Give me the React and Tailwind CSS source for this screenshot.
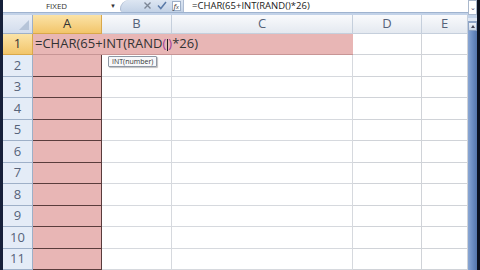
import React from "react";

const rows = [1, 2, 3, 4, 5, 6, 7, 8, 9, 10, 11];
const cols = ["A", "B", "C", "D", "E"];
const font = { fontFamily: '"Open Sans", "Liberation Sans", sans-serif' };

function FormulaText({ size }) {
  const big = size === "big";
  return (
    <span>
      =CHAR(65+INT(RAND
      <span className={big ? "text-[#a0409a]" : ""}>(</span>
      {big && <span className="inline-block w-px h-[12px] bg-[#222] align-middle mx-[0.5px]" />}
      <span className={big ? "text-[#a0409a]" : ""}>)</span>
      *26)
    </span>
  );
}

export default function App() {
  return (
    <div className="w-[480px] h-[270px] bg-[#0f1626] flex overflow-hidden" style={font}>
      <div className="w-[3px] shrink-0 bg-[#16203a]" />
      <div className="w-[465px] shrink-0 flex flex-col">
        {/* formula bar */}
        <div className="h-[15px] flex bg-white">
          <div className="w-[117px] flex items-center relative text-[8px] text-[#333] leading-none">
            <span className="flex-1 text-center">FIXED</span>
            <span className="text-[6px] pr-[4px] text-[#333]">▼</span>
          </div>
          <div className="w-[63px] flex items-center justify-end gap-[5px] pr-[2px] bg-gradient-to-b from-[#dde6f2] to-[#c3d2e6] rounded-tl-[12px] rounded-bl-[4px] border-l border-[#aebcd2]">
            <svg width="9" height="9" viewBox="0 0 9 9">
              <path d="M1.5 1.5 L7.5 7.5 M7.5 1.5 L1.5 7.5" stroke="#7d8796" strokeWidth="1.4" />
            </svg>
            <svg width="10" height="9" viewBox="0 0 10 9">
              <path d="M1 4.5 L3.8 7.5 L9 1" stroke="#5a7aa8" strokeWidth="1.5" fill="none" />
            </svg>
            <span className="text-[8px] italic text-[#333] leading-none bg-white px-[1px] border border-[#9fb0c8]">
              f<span className="text-[6px]">x</span>
            </span>
          </div>
          <div className="flex-1 flex items-center pl-[8px] text-[9.5px] text-[#222] border-l border-[#aebcd2] whitespace-nowrap leading-none">
            <FormulaText />
          </div>
        </div>
        <div className="h-[3px] bg-[#c2d2e8] border-t border-[#9fb3cf]" />
        {/* grid */}
        <div className="relative flex-1 bg-white">
          <div className="grid grid-cols-[30px_69px_70px_181px_69px_46px] grid-rows-[19px] auto-rows-[21.5px]">
            <div className="relative bg-gradient-to-b from-[#e9eef6] to-[#d3dded] border-r border-b border-[#9eb0c8]">
              <div className="absolute right-[3px] bottom-[3px] w-0 h-0 border-l-[10px] border-l-transparent border-b-[10px] border-b-[#b6c4d8]" />
            </div>
            {cols.map((c) => (
              <div
                key={c}
                className={
                  "flex items-center justify-center text-[13px] border-r border-b leading-none " +
                  (c === "A"
                    ? "bg-gradient-to-b from-[#fbe3a6] to-[#f2c56a] border-[#d9a84a] text-[#333]"
                    : "bg-gradient-to-b from-[#f9fafc] to-[#e4e9f0] border-[#c5cfdc] text-[#56637a]")
                }
              >
                {c}
              </div>
            ))}
            {rows.map((r) => (
              <React.Fragment key={r}>
                <div
                  className={
                    "flex items-center justify-center text-[13px] border-r border-b leading-none " +
                    (r === 1
                      ? "bg-gradient-to-b from-[#fbe3a6] to-[#f2c56a] border-[#d9a84a] text-[#333]"
                      : "bg-[#e4ecf7] border-[#9eb0c8] text-[#56637a]")
                  }
                >
                  {r}
                </div>
                {r === 1 ? (
                  <div className="col-span-3 bg-[#e8b6b5] border-b border-[#c79595] flex items-center pl-[2px] text-[13px] text-[#333] whitespace-nowrap leading-none">
                    <FormulaText size="big" />
                  </div>
                ) : (
                  <>
                    <div className="bg-[#e8b6b5] border-r border-b border-[#5a3c3c]" />
                    <div className="border-r border-b border-[#d6d9de]" />
                    <div className="border-r border-b border-[#d6d9de]" />
                  </>
                )}
                <div className="border-r border-b border-[#d0d3d8]" />
                <div className="border-r border-b border-[#d0d3d8]" />
              </React.Fragment>
            ))}
          </div>
          {/* tooltip */}
          <div className="absolute left-[105px] top-[41px] h-[11px] px-[3px] flex items-center bg-[#f7f8fa] border border-[#8e97a4] rounded-[1px] text-[7px] text-[#333] leading-none shadow-[1px_1px_1px_rgba(0,0,0,0.25)]">
            INT(number)
          </div>
        </div>
      </div>
      {/* scrollbar */}
      <div className="w-[9px] shrink-0 flex flex-col bg-[#6d8ec3]">
        <div className="h-[15px] bg-white flex items-center justify-center text-[7px] leading-none text-[#446] border border-[#aab8cc]">
          ⌄
        </div>
        <div className="h-[3px] bg-[#c2d2e8]" />
        <div className="h-[4px] bg-[#dfe7f3] border-b border-[#8ea4c6]" />
        <div className="h-[9px] bg-gradient-to-b from-[#eef2f8] to-[#c9d5e6] border border-[#8ea4c6] flex items-center justify-center">
          <div className="w-0 h-0 border-l-[2px] border-r-[2px] border-b-[3px] border-l-transparent border-r-transparent border-b-[#445]" />
        </div>
        <div className="flex-1 bg-gradient-to-r from-[#8aa7d4] via-[#6d8ec3] to-[#5576ac]" />
      </div>
      <div className="flex-1 bg-[#0c1220]" />
    </div>
  );
}
